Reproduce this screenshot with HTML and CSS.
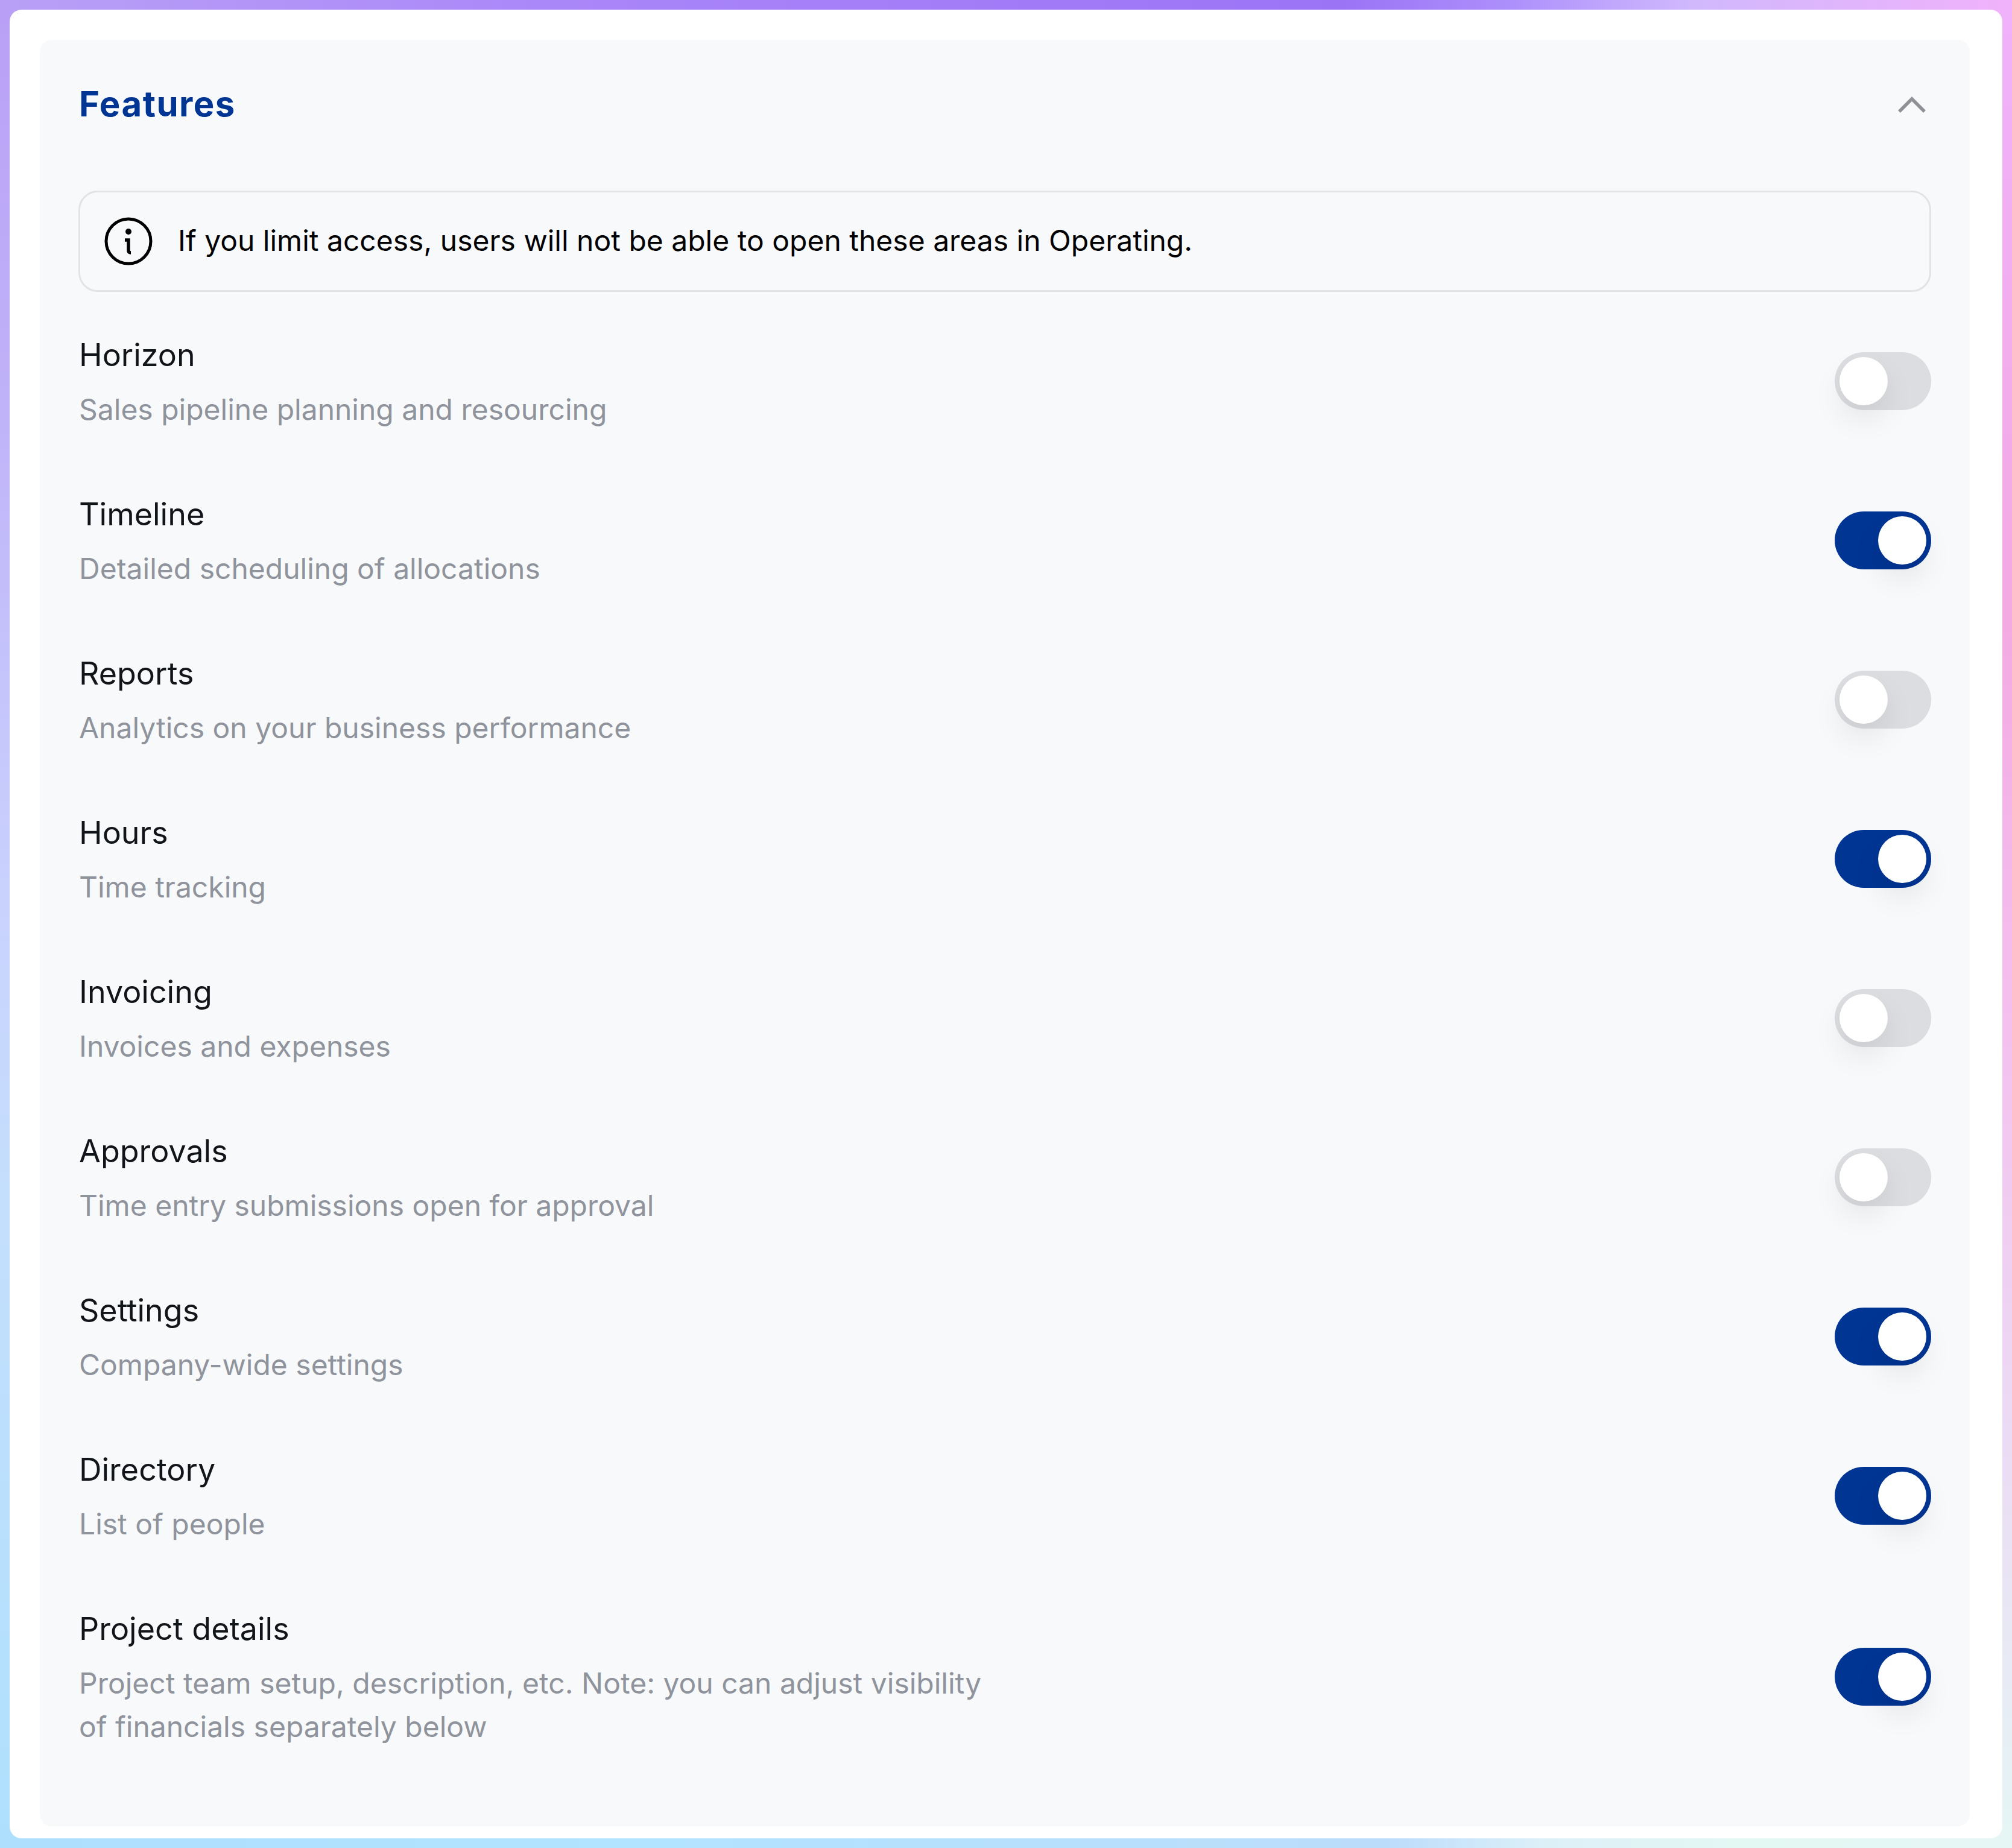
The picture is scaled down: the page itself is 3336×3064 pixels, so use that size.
FILE: index.html
```html
<!DOCTYPE html>
<html lang="en">
<head>
<meta charset="utf-8">
<title>Features</title>
<link rel="stylesheet" href="styles.css">
</head>
<body>
<div class="frame">
  <main class="card">
    <section class="panel">
      <header class="panel-head">
        <h2 class="panel-title">Features</h2>
        <svg class="chevron" width="48" height="28" viewBox="0 0 48 28"><path d="M3 25 L24 4 L45 25" fill="none" stroke="#8e9196" stroke-width="5.5"/></svg>
      </header>
      <div class="notice">
        <svg class="notice-icon" width="80" height="80" viewBox="0 0 80 80"><circle cx="40" cy="40" r="37" fill="none" stroke="#000" stroke-width="5"/><circle cx="40" cy="24" r="5" fill="#000"/><path d="M34 38 H40 V55 Q40 59 44 59" fill="none" stroke="#000" stroke-width="5.5"/></svg>
        <span class="notice-text">If you limit access, users will not be able to open these areas in Operating.</span>
      </div>
      <div class="rows">
        <div class="row"><div class="row-text"><div class="row-title">Horizon</div><div class="row-sub">Sales pipeline planning and resourcing</div></div><div class="toggle"><span class="knob"></span></div></div>
        <div class="row"><div class="row-text"><div class="row-title">Timeline</div><div class="row-sub">Detailed scheduling of allocations</div></div><div class="toggle on"><span class="knob"></span></div></div>
        <div class="row"><div class="row-text"><div class="row-title">Reports</div><div class="row-sub">Analytics on your business performance</div></div><div class="toggle"><span class="knob"></span></div></div>
        <div class="row"><div class="row-text"><div class="row-title">Hours</div><div class="row-sub">Time tracking</div></div><div class="toggle on"><span class="knob"></span></div></div>
        <div class="row"><div class="row-text"><div class="row-title">Invoicing</div><div class="row-sub">Invoices and expenses</div></div><div class="toggle"><span class="knob"></span></div></div>
        <div class="row"><div class="row-text"><div class="row-title">Approvals</div><div class="row-sub">Time entry submissions open for approval</div></div><div class="toggle"><span class="knob"></span></div></div>
        <div class="row"><div class="row-text"><div class="row-title">Settings</div><div class="row-sub">Company-wide settings</div></div><div class="toggle on"><span class="knob"></span></div></div>
        <div class="row"><div class="row-text"><div class="row-title">Directory</div><div class="row-sub">List of people</div></div><div class="toggle on"><span class="knob"></span></div></div>
        <div class="row"><div class="row-text"><div class="row-title">Project details</div><div class="row-sub">Project team setup, description, etc. Note: you can adjust visibility<br>of financials separately below</div></div><div class="toggle on"><span class="knob"></span></div></div>
      </div>
    </section>
  </main>
</div>
</body>
</html>
```

FILE: styles.css
```css
* { box-sizing: border-box; }
html, body { margin: 0; padding: 0; }
body { font-family: Inter, "Liberation Sans", sans-serif; }
.frame {
  width: 3336px;
  height: 3064px;
  padding: 16px;
  background-repeat: no-repeat;
  background-image:
    linear-gradient(90deg, #b9a0f6 0, #a985f9 1000px, #9b74f6 2230px, #ad8ffb 2500px, #d0b8fd 2800px, #f0b2fb 3336px),
    linear-gradient(90deg, #aee0fd 0, #b2e3ff 1100px, #b9dffb 2000px, #bcdcfc 2300px, #dcf0f8 2560px, #e4f8f3 2900px, #e6f6f5 3336px),
    linear-gradient(180deg, #b9a0f6 0, #bfb0f8 600px, #c9d2fd 1500px, #c4dffd 2000px, #aee0fd 3064px),
    linear-gradient(180deg, #f0b2fb 0, #f3a9e2 1000px, #f4c0ee 1700px, #ecd8f4 2300px, #e5f6f5 3064px);
  background-size: 100% 40px, 100% 40px, 40px 100%, 40px 100%;
  background-position: left top, left bottom, left top, right top;
}
.card {
  height: 3032px;
  background: #fff;
  border-radius: 20px;
  padding: 50px 54px 20px 50px;
}
.panel {
  height: 2962px;
  background: #f8f9fb;
  border-radius: 20px;
  padding: 0 64px;
}
.panel-head {
  height: 250px;
  display: flex;
  align-items: center;
  justify-content: space-between;
  padding-bottom: 38px;
}
.panel-title {
  margin: 0;
  padding-left: 1px;
  font-size: 58px;
  font-weight: 700;
  letter-spacing: 1.5px;
  color: #003594;
}
.chevron { margin: 4px 8px 0 0; }
.notice {
  height: 168px;
  border: 3px solid #e1e3e6;
  border-radius: 32px;
  display: flex;
  align-items: center;
  gap: 42px;
  padding-left: 40px;
}
.notice-text {
  font-size: 48px;
  padding-bottom: 4px;
  color: #000;
}
.rows {
  display: flex;
  flex-direction: column;
  gap: 102px;
  margin-top: 67px;
}
.row {
  display: flex;
  align-items: center;
  justify-content: space-between;
}
.row-text {
  display: flex;
  flex-direction: column;
  gap: 18px;
  padding: 2px 0 0 1px;
  margin-bottom: -2px;
}
.row-title {
  font-size: 52px;
  line-height: 72px;
  color: #111418;
}
.row-sub {
  font-size: 48px;
  line-height: 72px;
  color: #8f939b;
}
.toggle {
  width: 160px;
  height: 96px;
  padding: 8px;
  border-radius: 48px;
  background: #dcdde0;
  display: flex;
}
.toggle.on {
  background: #003594;
  justify-content: flex-end;
}
.knob {
  width: 80px;
  height: 80px;
  border-radius: 50%;
  background: #fff;
  box-shadow: 0 24px 48px rgba(0,0,0,0.08);
}
```
